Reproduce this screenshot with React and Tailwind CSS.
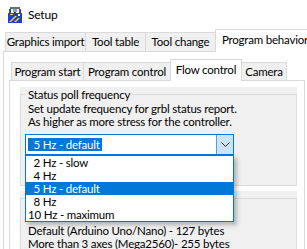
import React from "react"

// small app icon in the title bar
const SetupIcon = () => (
  <svg width="16" height="16" viewBox="0 0 16 16">
    <rect x="3" y="0" width="10" height="2" fill="#6b6b8a" />
    <rect x="2" y="2" width="2" height="4" fill="#4a4a66" />
    <rect x="12" y="2" width="2" height="4" fill="#4a4a66" />
    <rect x="6" y="2" width="4" height="3" fill="#9a9ab8" />
    <rect x="7" y="5" width="2" height="2" fill="#333344" />
    <rect x="1" y="6" width="14" height="10" fill="#1f3fd0" />
    <polygon points="2,15 8,9 10,9 4,15" fill="#f4d41a" />
    <polygon points="7,15 11,11 13,11 9,15" fill="#f4d41a" />
    <rect x="11" y="7" width="2" height="2" fill="#ffffff" />
    <rect x="3" y="7" width="3" height="1" fill="#f4d41a" />
  </svg>
)

const Tab = ({ label, width, selected, first, big }) => {
  if (selected) {
    return (
      <div
        className={`relative z-10 -mb-px -ml-px flex shrink-0 items-center justify-center border border-b-0 border-[#d9d9d9] bg-white pb-[2px] whitespace-nowrap ${big ? "h-[23px]" : "h-[22px]"}`}
        style={{ width }}
      >
        {label}
      </div>
    )
  }
  return (
    <div
      className={`flex shrink-0 items-center justify-center border border-b-0 border-[#d9d9d9] bg-[#f0f0f0] whitespace-nowrap ${big ? "h-[19px]" : "h-[18px]"} ${first ? "" : "-ml-px"}`}
      style={{ width }}
    >
      {label}
    </div>
  )
}

const rates = ["  2 Hz - slow", "  4 Hz", "  5 Hz - default", "  8 Hz", "10 Hz - maximum"]

const ComboBox = () => (
  <div className="relative mt-[6px] ml-[4px] w-[209px]">
    <div className="flex h-[21px] border border-[#0078d7] bg-white">
      <div className="flex flex-1 items-center pl-[2px]">
        <span className="inline-block h-[13px] bg-[#0078d7] pr-[2px] leading-[13px] text-white whitespace-pre">
          {"  5 Hz - default"}
        </span>
      </div>
      <div className="flex w-[17px] items-center justify-center border-l border-[#569de5] bg-[#cce4f7]">
        <svg width="9" height="5" viewBox="0 0 9 5">
          <path d="M0.5 0.5 L4.5 4.5 L8.5 0.5" fill="none" stroke="#333" strokeWidth="1" />
        </svg>
      </div>
    </div>
    <div className="absolute left-0 top-full z-20 w-[209px] border border-[#0078d7] bg-white shadow-[3px_3px_4px_rgba(0,0,0,0.25)]">
      {rates.map((r) => (
        <div
          key={r}
          className={`h-[13px] pl-[2px] leading-[13px] whitespace-pre ${r.includes("default") ? "bg-[#0078d7] text-white" : ""}`}
        >
          {r}
        </div>
      ))}
    </div>
  </div>
)

export default function App() {
  return (
    <div className="h-[249px] w-[307px] overflow-hidden bg-white text-[11.5px] tracking-[-0.2px] text-black font-['Lato',sans-serif]">
      {/* title bar */}
      <div className="flex h-[29px] items-center gap-[5px] pl-[7px] pt-[1px] text-[12px]">
        <SetupIcon />
        <span>Setup</span>
      </div>

      {/* outer tabs */}
      <div className="flex h-[22px] items-end pl-[5px]">
        <Tab label="Graphics import" width={81} first big />
        <Tab label="Tool table" width={61} big />
        <Tab label="Tool change" width={71} big />
        <Tab label="Program behavior" width={100} selected big />
      </div>

      <div className="ml-[3px] border-l border-t border-[#d9d9d9] pl-[5px] pt-[7px]">
        {/* inner tabs */}
        <div className="flex h-[21px] items-end pl-[2px]">
          <Tab label="Program start" width={73} first />
          <Tab label="Program control" width={88} />
          <Tab label="Flow control" width={72} selected />
          <Tab label="Camera" width={46} />
        </div>

        <div className="h-[200px] w-[296px] border border-[#d9d9d9] bg-white pl-[10px] pt-[6px]">
          <div className="w-[277px] bg-[#f0f0f0]">
            <fieldset className="border border-[#dcdcdc] pb-[30px]">
              <legend className="ml-[5px] px-[2px] leading-[15px]">Status poll frequency</legend>
              <div className="pl-[7px] leading-[13px]">
                <div>Set update frequency for grbl status report.</div>
                <div>As higher as more stress for the controller.</div>
              </div>
              <ComboBox />
            </fieldset>
          </div>

          <div className="mt-[5px] w-[277px] bg-[#f0f0f0]">
            <fieldset className="border border-[#dcdcdc] pb-[10px]">
              <legend className="ml-[5px] h-[15px] w-0" />
              <div className="pl-[7px] pt-[18px] leading-[13px]">
                <div>Default (Arduino Uno/Nano) - 127 bytes</div>
                <div>More than 3 axes (Mega2560)- 255 bytes</div>
              </div>
            </fieldset>
          </div>
        </div>
      </div>
    </div>
  )
}
